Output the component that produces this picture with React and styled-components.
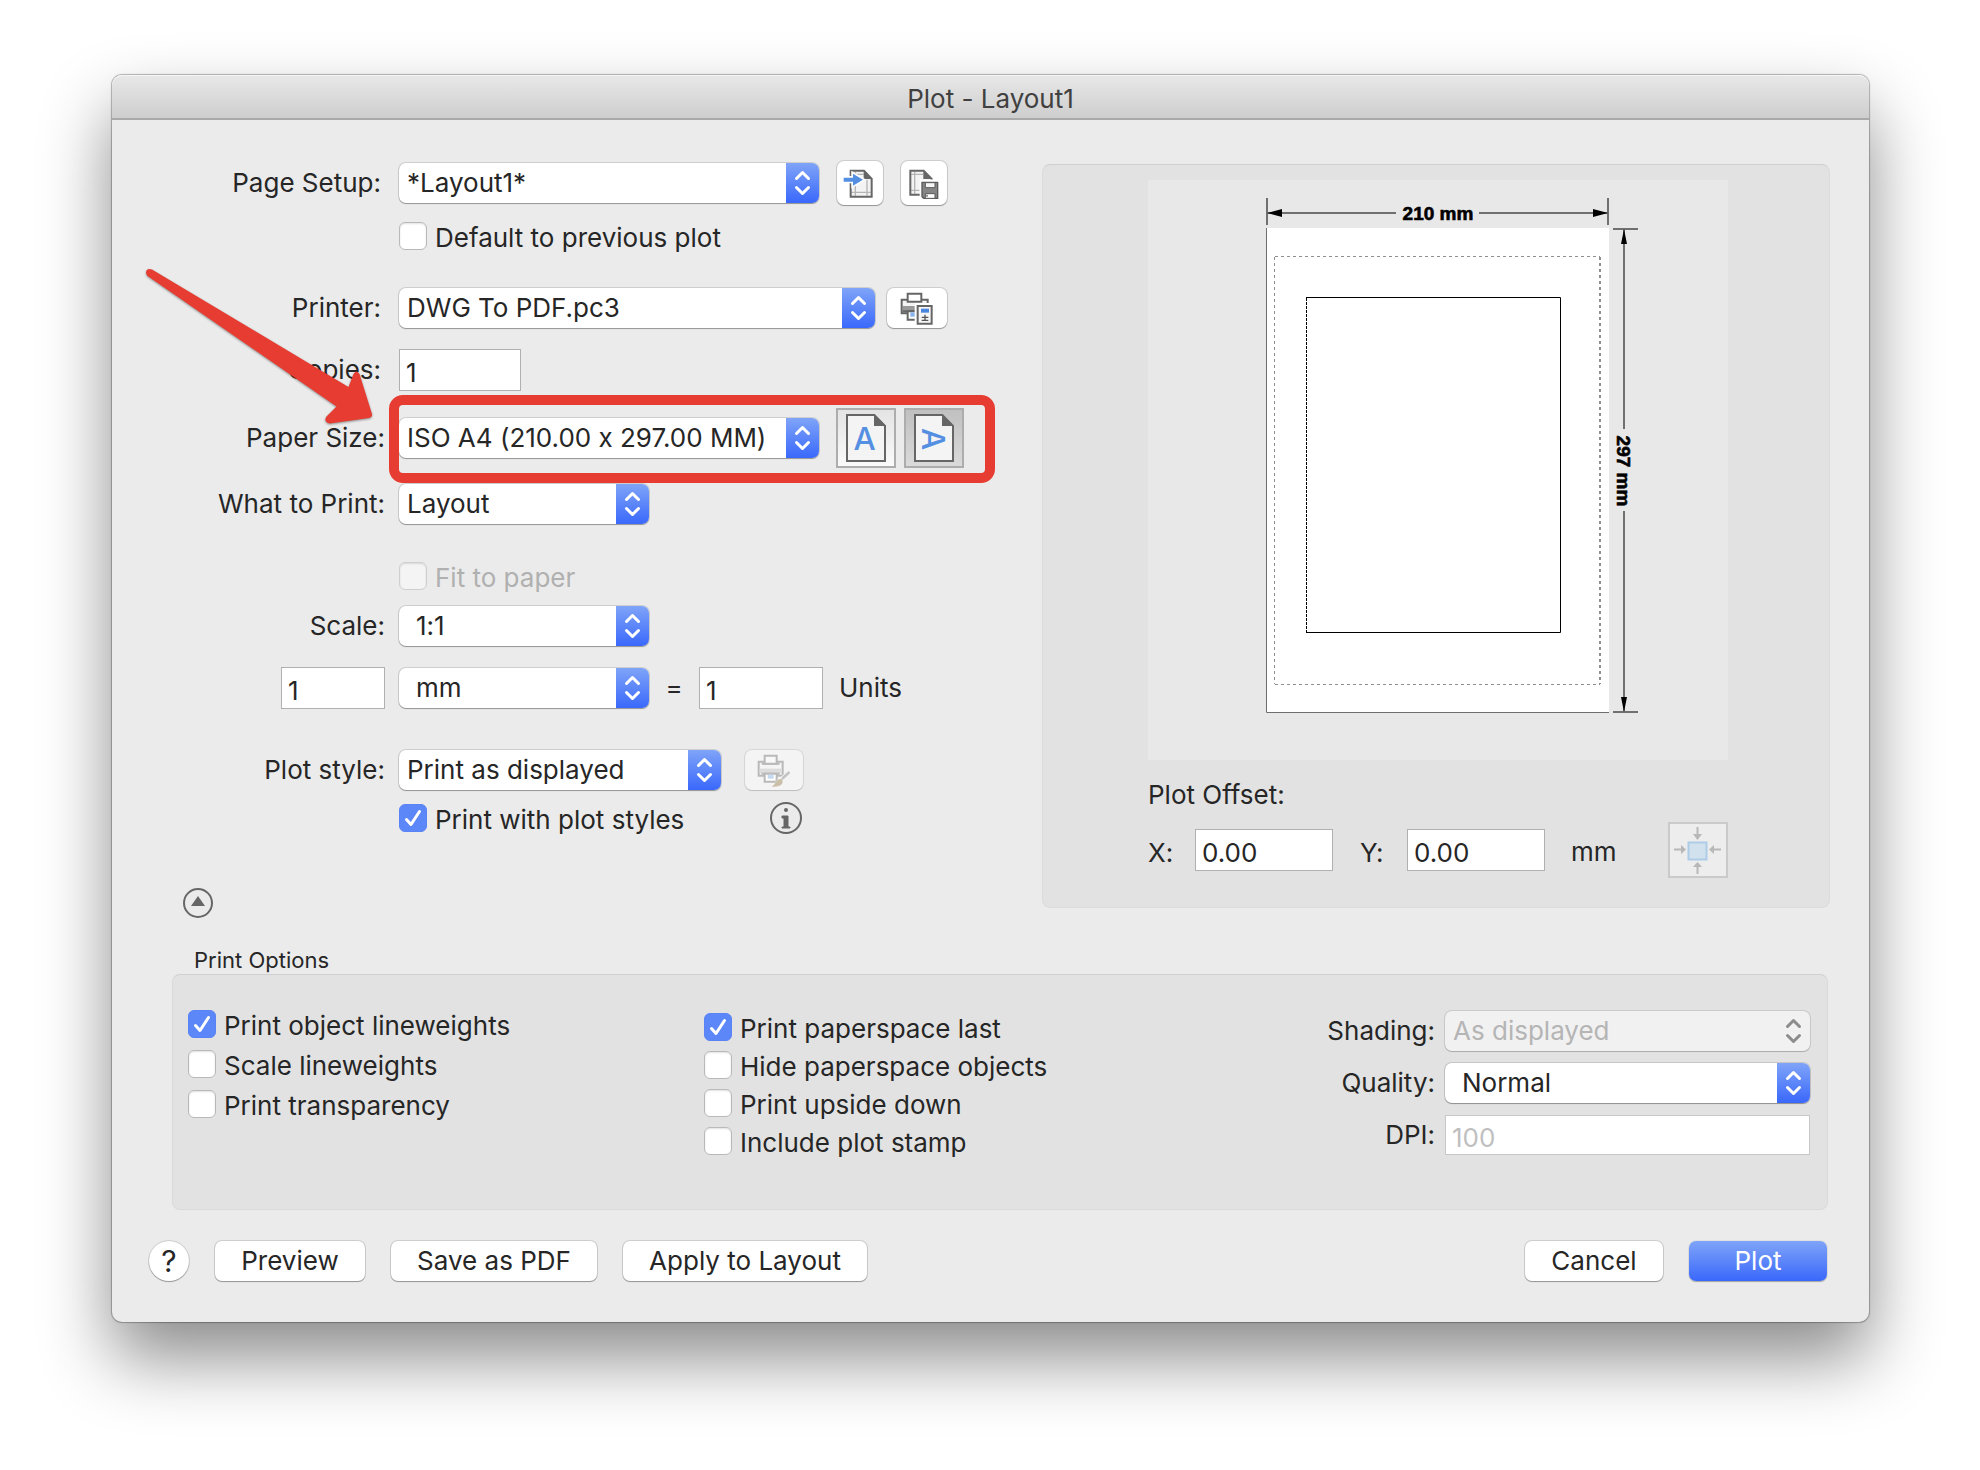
import React from "react";
import styled, { createGlobalStyle, css } from "styled-components";

const GlobalStyle = createGlobalStyle`
  *, *::before, *::after { box-sizing: border-box; }
  body {
    margin: 0;
    background: #fff;
    color: #262626;
    font: 26px/30px Inter, "Liberation Sans", sans-serif;
    font-feature-settings: "calt" 0;
  }
  button, input, select { font: inherit; font-feature-settings: inherit; color: inherit; margin: 0; }
`;

const Page = styled.div`
  min-height: 100vh;
  padding: 75px 111px 148px 112px;
  overflow: hidden;
`;

const Dialog = styled.main`
  border-radius: 10px;
  background: #ebebeb;
  box-shadow: 0 0 1px 1px rgba(0, 0, 0, 0.28), 0 36px 70px rgba(0, 0, 0, 0.46);
`;

const TitleBar = styled.header`
  height: 45px;
  display: flex;
  align-items: center;
  justify-content: center;
  padding-top: 4px;
  border-bottom: 2px solid #a9a9a9;
  border-radius: 10px 10px 0 0;
  background: linear-gradient(#e8e8e8, #cecece);
  box-shadow: inset 0 1px 0 #f5f5f5;
`;

const Title = styled.h1`
  margin: 0;
  font-size: 26px;
  font-weight: 400;
  color: #404040;
`;

const Body = styled.div`
  display: grid;
  grid-template-columns: minmax(0, 1fr) 788px;
  padding: 41px 39px 0 0;
`;

const Form = styled.form`
  display: flex;
  flex-direction: column;
`;

const Row = styled.div`
  display: flex;
  align-items: center;
  height: ${(p) => p.$height || 40}px;
  margin-top: ${(p) => p.$before || 0}px;
`;

const LabelCell = styled.div`
  flex: none;
  display: flex;
  justify-content: flex-end;
  width: 287px;
  padding-right: ${(p) => (p.$wide ? 18 : 14)}px;
  white-space: nowrap;
`;

const Controls = styled.div`
  position: relative;
  display: flex;
  align-items: center;
  gap: ${(p) => p.$gap || 0}px;
`;

const highlight = css`
  &::after {
    content: "";
    position: absolute;
    inset: -13px -31px -15px -10px;
    border: 10px solid #e63c32;
    border-radius: 14px;
    pointer-events: none;
  }
`;

const HighlightedControls = styled(Controls)`
  ${highlight}
`;

const SelectBox = styled.div`
  display: grid;
  width: ${(p) => (p.$width ? p.$width + "px" : "100%")};
  height: 40px;
  border-radius: 7px;
  background: ${(p) => (p.$disabled ? "#f1f1f1" : "#fff")};
  box-shadow: 0 0 0 1px rgba(0, 0, 0, ${(p) => (p.$disabled ? 0.1 : 0.12)}),
    0 1px 1px rgba(0, 0, 0, ${(p) => (p.$disabled ? 0.16 : 0.28)});
  & > * { grid-area: 1 / 1; }
`;

const SelectInput = styled.select`
  appearance: none;
  width: 100%;
  height: 40px;
  border: 0;
  border-radius: 7px;
  background: transparent;
  padding: 0 34px 0 ${(p) => (p.$indent ? 17 : 8)}px;
  outline: none;
  opacity: 1;
  &:disabled { color: #b5b5b5; }
`;

const Stepper = styled.span`
  justify-self: end;
  width: 33px;
  height: 40px;
  border-radius: 0 7px 7px 0;
  background: ${(p) => (p.$disabled ? "none" : "linear-gradient(#7fa4f8, #3a68fb)")};
  color: ${(p) => (p.$disabled ? "#8c8c8c" : "#fff")};
  pointer-events: none;
  & svg { display: block; }
`;

const TextInput = styled.input`
  width: ${(p) => (p.$width ? p.$width + "px" : "100%")};
  height: ${(p) => p.$height || 42}px;
  border: 1px solid #b0b0b0;
  border-radius: 0;
  background: #fff;
  padding: 4px 6px 0;
  outline: none;
  &:disabled { color: #bfbfbf; border-color: #c8c8c8; }
`;

const CheckLabel = styled.label`
  display: flex;
  align-items: center;
  gap: 8px;
  height: 28px;
  white-space: nowrap;
  color: ${(p) => (p.$disabled ? "#b0b0b0" : "inherit")};
`;

const CheckMark = styled.span`
  display: grid;
  width: 28px;
  height: 28px;
  & > * { grid-area: 1 / 1; }
  & svg { pointer-events: none; }
`;

const CheckInput = styled.input`
  appearance: none;
  width: 28px;
  height: 28px;
  border: 1px solid #b9b9b9;
  border-radius: 6px;
  background: #fff;
  box-shadow: inset 0 1px 2px rgba(0, 0, 0, 0.12);
  &:checked { border-color: #5a83f5; background: #5c87f8; box-shadow: none; }
  &:disabled { border-color: #cfcfcf; background: #f4f4f4; }
`;

const CheckText = styled.span`
  padding-top: 3px;
`;

const IconButton = styled.button`
  flex: none;
  display: block;
  width: ${(p) => p.$width}px;
  height: ${(p) => p.$height}px;
  padding: 0;
  border: 0;
  border-radius: 7px;
  background: ${(p) => (p.disabled ? "#f4f4f4" : "#fff")};
  box-shadow: 0 0 0 1px rgba(0, 0, 0, ${(p) => (p.disabled ? 0.08 : 0.12)}),
    0 1px 1px rgba(0, 0, 0, ${(p) => (p.disabled ? 0.12 : 0.28)});
  & svg { display: block; }
`;

const SquareButton = styled.button`
  flex: none;
  display: block;
  width: 60px;
  height: ${(p) => p.$height || 60}px;
  padding: 0;
  border: 2px solid ${(p) => (p.disabled ? "#cacaca" : "#adadad")};
  background: ${(p) =>
    p.disabled ? "#ededed" : p.$selected ? "linear-gradient(#c0c0c0, #dadada)" : "linear-gradient(#e4e4e4, #fafafa)"};
  & svg { display: block; margin: -2px; }
`;

const RoundButton = styled.button`
  display: block;
  padding: 0;
  border: 0;
  background: none;
  & svg { display: block; }
`;

const Arrow = styled.svg`
  position: absolute;
  left: -259px;
  top: -146px;
  pointer-events: none;
`;

const Spacer = styled.div`
  width: ${(p) => p.$width}px;
  text-align: center;
`;

const CollapseRow = styled.div`
  padding: 54px 0 0 71px;
`;

const PreviewPanel = styled.section`
  margin-top: 3px;
  height: 744px;
  padding: 15px 101px 0 105px;
  border: 1px solid #dcdcdc;
  border-top-color: #d0d0d0;
  border-radius: 8px;
  background: #e2e2e2;
`;

const Sheet = styled.svg`
  display: block;
  background: #e8e8e8;
`;

const OffsetTitle = styled.h2`
  margin: 20px 0 12px;
  font-size: 26px;
  font-weight: 400;
`;

const OffsetRow = styled.div`
  display: flex;
  align-items: center;
  height: 56px;
`;

const OffsetField = styled.label`
  display: grid;
  grid-template-columns: 47px 138px;
  align-items: baseline;
  margin-right: ${(p) => p.$after}px;
`;

const OffsetUnit = styled.span`
  padding-top: 4px;
`;

const Push = styled.div`
  margin-left: auto;
`;

const Options = styled.section`
  padding: 29px 41px 0 60px;
`;

const OptionsTitle = styled.h2`
  margin: 0 0 1px 22px;
  font-size: 22px;
  line-height: 26px;
  font-weight: 400;
`;

const OptionsBox = styled.div`
  display: grid;
  grid-template-columns: 516px 1fr auto;
  align-items: start;
  min-height: 236px;
  padding: 35px 17px 0 15px;
  border: 1px solid #dadada;
  border-top-color: #d0d0d0;
  border-radius: 8px;
  background: #e2e2e2;
`;

const CheckList = styled.div`
  display: flex;
  flex-direction: column;
  gap: ${(p) => p.$gap}px;
  padding-top: ${(p) => p.$top || 0}px;
`;

const QualityGrid = styled.div`
  display: grid;
  grid-template-columns: auto 365px;
  align-items: center;
  justify-items: end;
  gap: 12px 10px;
  padding-top: 1px;
`;

const Footer = styled.footer`
  display: flex;
  align-items: center;
  gap: 26px;
  padding: 31px 42px 41px 37px;
`;

const PushButton = styled.button`
  display: block;
  width: ${(p) => p.$width}px;
  height: 40px;
  padding: 0;
  border: 0;
  border-radius: 7px;
  white-space: nowrap;
  background: ${(p) => (p.$primary ? "linear-gradient(#7fa4f8, #3a68fb)" : "#fff")};
  color: ${(p) => (p.$primary ? "#fff" : "inherit")};
  box-shadow: 0 0 0 1px rgba(0, 0, 0, ${(p) => (p.$primary ? 0.04 : 0.12)}), 0 1px 1px rgba(0, 0, 0, 0.28);
`;

const HelpButton = styled(PushButton)`
  border-radius: 50%;
  font-size: 30px;
`;

function Select({ id, value, width, indent, disabled }) {
  return (
    <SelectBox $width={width} $disabled={disabled}>
      <SelectInput id={id} $indent={indent} disabled={disabled} defaultValue={value}>
        <option>{value}</option>
      </SelectInput>
      <Stepper $disabled={disabled} aria-hidden="true">
        <svg width="33" height="40" fill="none" stroke="currentColor" strokeWidth="3" strokeLinecap="round" strokeLinejoin="round">
          <path d="M10.5 15.5 16.5 9.5 22.5 15.5M10.5 24.5 16.5 30.5 22.5 24.5" />
        </svg>
      </Stepper>
    </SelectBox>
  );
}

function Check({ children, checked, disabled }) {
  return (
    <CheckLabel $disabled={disabled}>
      <CheckMark>
        <CheckInput type="checkbox" defaultChecked={checked} disabled={disabled} />
        {checked && (
          <svg width="28" height="28" fill="none" stroke="#fff" strokeWidth="3" strokeLinecap="round" strokeLinejoin="round">
            <path d="M7.5 15.5 12 20.5 20.5 7.5" />
          </svg>
        )}
      </CheckMark>
      <CheckText>{children}</CheckText>
    </CheckLabel>
  );
}

const ImportIcon = () => (
  <svg width="46" height="44" viewBox="0 0 138 132">
    <path d="M41 29H81L104 54V107H41Z" fill="#f3f3f3" />
    <path d="M55 32V104M90 56V104M44 40H80M44 94H101" stroke="#b5b5b5" strokeWidth="4" />
    <path d="M41 29H81L104 54V107H41Z" fill="none" stroke="#666" strokeWidth="6" />
    <path d="M80 26L107 54H80Z" fill="#666" />
    <path d="M20 50H48V38L78 56 48 74V62H20Z" fill="#548fe2" stroke="#fff" strokeWidth="10" paintOrder="stroke" />
  </svg>
);

const SaveSetupIcon = () => (
  <svg width="46" height="44" viewBox="0 0 138 132">
    <path d="M28 29H68L92 54V101H28Z" fill="#f3f3f3" />
    <path d="M41 32V98M31 40H66M31 88H56" stroke="#b5b5b5" strokeWidth="4" />
    <path d="M92 56V54L68 29H28V101H58" fill="none" stroke="#666" strokeWidth="6" />
    <path d="M67 26L94 54H67Z" fill="#666" />
    <path d="M56 56H118V120H56Z" fill="#fff" />
    <path d="M63 64H110V112H68L63 107Z" fill="#858585" stroke="#5a5a5a" strokeWidth="4" />
    <path d="M73 65H102V80H73Z" fill="#f4f4f4" stroke="#5a5a5a" strokeWidth="3" />
    <path d="M73 98H102V112H73Z" fill="#fff" stroke="#5a5a5a" strokeWidth="3" />
    <path d="M76 101H80V107H76Z" fill="#5a5a5a" />
  </svg>
);

const PrinterSetupIcon = () => (
  <svg width="60" height="40" viewBox="0 0 180 120">
    <path d="M44 35H122V76H44Z" fill="#f4f4f4" />
    <path d="M47 54H119V73H47Z" fill="#999" />
    <path d="M62 35H44V76H62M104 35H122V50" fill="none" stroke="#666" strokeWidth="6" />
    <path d="M62 41V17H103V41Z" fill="#fff" stroke="#666" strokeWidth="6" />
    <path d="M47 70H84" stroke="#666" strokeWidth="6" />
    <path d="M62 70V95H90V70Z" fill="#fff" stroke="#666" strokeWidth="6" />
    <path d="M70 73H84V86H70Z" fill="#8ab4ec" />
    <path d="M83 45H142V114H83Z" fill="#fff" />
    <path d="M92 54H134V107H92Z" fill="#f7f7f7" stroke="#666" strokeWidth="6" />
    <path d="M102 62H126V74H102Z" fill="#4a86e0" />
    <path d="M104 88H124M114 80V97M104 97H124" stroke="#555" strokeWidth="4" fill="none" />
  </svg>
);

const PrinterStyleIcon = () => (
  <svg width="58" height="40" viewBox="0 0 174 120">
    <path d="M41 35H113V77H41Z" fill="#f4f4f4" stroke="#b9b9b9" strokeWidth="6" />
    <path d="M44 56H110V70H44Z" fill="#dcdcdc" />
    <path d="M50 41H104M50 71H104" stroke="#b9b9b9" strokeWidth="6" />
    <path d="M59 41V17H95V41Z" fill="#f8f8f8" stroke="#b9b9b9" strokeWidth="6" />
    <path d="M59 71V95H95V71Z" fill="#fff" stroke="#b9b9b9" strokeWidth="6" />
    <path d="M68 74H86V86H68Z" fill="#c5d9f1" />
    <path d="M82 111Q96 82 132 64L140 72Q120 104 100 111Z" fill="#f4f4f4" />
    <path d="M131 68L113 85" stroke="#c4c4c4" strokeWidth="8" strokeLinecap="round" />
    <path d="M80 110Q88 106 92 96 100 84 111 88 116 98 108 105 98 112 80 110Z" fill="#cbbfa9" />
  </svg>
);

const OrientationIcon = ({ rotated }) => (
  <svg width="60" height="60" viewBox="0 0 180 180">
    <path d="M33 21H115L147 54V159H33Z" fill="#f4f4f4" stroke="#666" strokeWidth="6" />
    <path d="M114 18L150 54H114Z" fill="#666" />
    <text
      x="0"
      y="0"
      transform={rotated ? "translate(54 93) rotate(90)" : "translate(86 126)"}
      textAnchor="middle"
      fontFamily="Inter, sans-serif"
      fontSize="94"
      fontWeight="500"
      fill="#548fe2"
    >
      A
    </text>
  </svg>
);

const CenterIcon = () => (
  <svg width="60" height="56" fill="none" stroke="#b8b8b8" strokeWidth="2">
    <path d="M20.500 20.500H38.500V37.500H20.500Z" fill="#d1e2ee" stroke="#aecbe8" />
    <path d="M29.500 5V13M29.500 52V44M6 27.500H14M53 27.500H45" />
    <path d="M25 12H34L29.500 18ZM25 45H34L29.500 40ZM13 23V32L18 27.500ZM46 23V32L41 27.500Z" fill="#b8b8b8" stroke="none" />
  </svg>
);

const InfoIcon = () => (
  <svg width="32" height="32" fill="none" stroke="#666" strokeWidth="2">
    <circle cx="16" cy="16" r="15" />
    <circle cx="16" cy="8" r="2" fill="#666" stroke="none" />
    <path d="M12 14H18V25H20V26H12V25H14V16H12Z" fill="#666" stroke="#666" strokeWidth="1" />
  </svg>
);

const CollapseIcon = () => (
  <svg width="30" height="30" fill="none" stroke="#666" strokeWidth="2">
    <circle cx="15" cy="15" r="14" />
    <path d="M15 8L22 18H8Z" fill="#666" stroke="none" />
  </svg>
);

function PaperPreview() {
  return (
    <Sheet width="580" height="580" role="img" aria-label="Paper preview">
      <path d="M118 48H461V533H118Z" fill="#fff" />
      <path d="M118.500 48V532.500H461" fill="none" stroke="#6e6e6e" />
      <g stroke="#8f8f8f" strokeDasharray="3 3" fill="none">
        <path d="M126.500 77V504M127 76.500H452M127 504.500H452" />
        <path d="M452 77V504" strokeWidth="2" />
      </g>
      <g stroke="#000" fill="none">
        <path d="M158 117.500H412.500V452.500H158" />
        <path d="M158.500 118V452" strokeDasharray="3 1" />
      </g>
      <g stroke="#707070" strokeWidth="2" fill="none">
        <path d="M119 18V45M460 18V45M119 33H248M331 33H460" />
        <path d="M465 49H490M465 532H490M476 49V249M476 331V532" />
      </g>
      <path d="M119 33L134 29V37ZM460 33L445 29V37ZM476 49L473 64H479ZM476 532L473 517H479Z" fill="#000" />
      <g fontFamily="Liberation Sans, Arial, sans-serif" fontSize="19" fontWeight="700" textAnchor="middle" fill="#000" stroke="#000" strokeWidth="0.6">
        <text x="290" y="40">210 mm</text>
        <text transform="translate(469 291) rotate(90)">297 mm</text>
      </g>
    </Sheet>
  );
}

export default function App() {
  return (
    <Page>
      <GlobalStyle />
      <Dialog>
        <TitleBar>
          <Title>Plot - Layout1</Title>
        </TitleBar>

        <Body>
          <Form onSubmit={(e) => e.preventDefault()}>
            <Row $height={44}>
              <LabelCell $wide><label htmlFor="setup">Page Setup:</label></LabelCell>
              <Controls $gap={18}>
                <Select id="setup" value="*Layout1*" width={420} />
                <IconButton type="button" $width={46} $height={44} aria-label="Import page setup"><ImportIcon /></IconButton>
                <IconButton type="button" $width={46} $height={44} aria-label="Save page setup"><SaveSetupIcon /></IconButton>
              </Controls>
            </Row>
            <Row $before={17} $height={28}>
              <LabelCell />
              <Check>Default to previous plot</Check>
            </Row>
            <Row $before={38}>
              <LabelCell $wide><label htmlFor="printer">Printer:</label></LabelCell>
              <Controls $gap={12}>
                <Select id="printer" value="DWG To PDF.pc3" width={476} />
                <IconButton type="button" $width={60} $height={40} aria-label="Printer settings"><PrinterSetupIcon /></IconButton>
              </Controls>
            </Row>
            <Row $before={21} $height={42}>
              <LabelCell $wide><label htmlFor="copies">Copies:</label></LabelCell>
              <TextInput id="copies" $width={122} defaultValue="1" />
            </Row>
            <Row $before={17} $height={60}>
              <LabelCell><label htmlFor="paper">Paper Size:</label></LabelCell>
              <HighlightedControls $gap={17}>
                <Select id="paper" value="ISO A4 (210.00 x 297.00 MM)" width={420} />
                <Controls $gap={8}>
                  <SquareButton type="button" aria-label="Portrait"><OrientationIcon /></SquareButton>
                  <SquareButton type="button" $selected aria-label="Landscape"><OrientationIcon rotated /></SquareButton>
                </Controls>
                <Arrow width="240" height="170" viewBox="140 262 240 170" aria-hidden="true">
                  <path
                    d="M152 269.500L348.500 387 353.500 374Q356.500 369 359.500 374L372 414Q372.500 417 369 418L330 423.500Q323 422 326.500 416.500L336.500 406.500 147.500 276Q144 271 148.500 269Z"
                    fill="#e63c32"
                    filter="drop-shadow(0 1px 1px rgba(0,0,0,.4))"
                  />
                </Arrow>
              </HighlightedControls>
            </Row>
            <Row $before={16}>
              <LabelCell><label htmlFor="what">What to Print:</label></LabelCell>
              <Select id="what" value="Layout" width={250} />
            </Row>
            <Row $before={38} $height={28}>
              <LabelCell />
              <Check disabled>Fit to paper</Check>
            </Row>
            <Row $before={16}>
              <LabelCell><label htmlFor="scale">Scale:</label></LabelCell>
              <Select id="scale" value="1:1" width={250} indent />
            </Row>
            <Row $before={21} $height={42}>
              <LabelCell><TextInput aria-label="Paper units" $width={104} defaultValue="1" /></LabelCell>
              <Select id="unit" value="mm" width={250} indent />
              <Spacer $width={50}>=</Spacer>
              <Controls $gap={16}>
                <TextInput id="units" $width={124} defaultValue="1" />
                <label htmlFor="units">Units</label>
              </Controls>
            </Row>
            <Row $before={41}>
              <LabelCell><label htmlFor="style">Plot style:</label></LabelCell>
              <Controls $gap={24}>
                <Select id="style" value="Print as displayed" width={322} />
                <IconButton type="button" disabled $width={58} $height={40} aria-label="Edit plot style"><PrinterStyleIcon /></IconButton>
              </Controls>
            </Row>
            <Row $before={12} $height={32}>
              <LabelCell />
              <Spacer $width={371}>
                <Check checked>Print with plot styles</Check>
              </Spacer>
              <RoundButton type="button" aria-label="Plot style information"><InfoIcon /></RoundButton>
            </Row>
            <CollapseRow>
              <RoundButton type="button" aria-label="Hide print options"><CollapseIcon /></RoundButton>
            </CollapseRow>
          </Form>

          <PreviewPanel>
            <PaperPreview />
            <OffsetTitle>Plot Offset:</OffsetTitle>
            <OffsetRow>
              <OffsetField $after={27}>X:<TextInput defaultValue="0.00" /></OffsetField>
              <OffsetField $after={26}>Y:<TextInput defaultValue="0.00" /></OffsetField>
              <OffsetUnit>mm</OffsetUnit>
              <Push>
                <SquareButton type="button" disabled $height={56} aria-label="Center the plot"><CenterIcon /></SquareButton>
              </Push>
            </OffsetRow>
          </PreviewPanel>
        </Body>

        <Options>
          <OptionsTitle>Print Options</OptionsTitle>
          <OptionsBox>
            <CheckList $gap={12}>
              <Check checked>Print object lineweights</Check>
              <Check>Scale lineweights</Check>
              <Check>Print transparency</Check>
            </CheckList>
            <CheckList $gap={10} $top={3}>
              <Check checked>Print paperspace last</Check>
              <Check>Hide paperspace objects</Check>
              <Check>Print upside down</Check>
              <Check>Include plot stamp</Check>
            </CheckList>
            <QualityGrid>
              <label htmlFor="shading">Shading:</label>
              <Select id="shading" value="As displayed" disabled />
              <label htmlFor="quality">Quality:</label>
              <Select id="quality" value="Normal" indent />
              <label htmlFor="dpi">DPI:</label>
              <TextInput id="dpi" $height={40} defaultValue="100" disabled />
            </QualityGrid>
          </OptionsBox>
        </Options>

        <Footer>
          <HelpButton type="button" $width={40}>?</HelpButton>
          <PushButton type="button" $width={150}>Preview</PushButton>
          <PushButton type="button" $width={206}>Save as PDF</PushButton>
          <PushButton type="button" $width={244}>Apply to Layout</PushButton>
          <Push>
            <PushButton type="button" $width={138}>Cancel</PushButton>
          </Push>
          <PushButton type="button" $primary $width={138}>Plot</PushButton>
        </Footer>
      </Dialog>
    </Page>
  );
}
